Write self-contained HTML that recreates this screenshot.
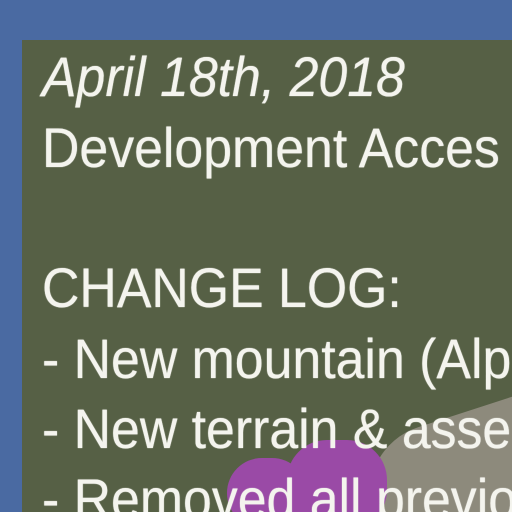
<!DOCTYPE html>
<html><head><style>
html,body{margin:0;padding:0;width:512px;height:512px;overflow:hidden;}
body{background:#4a6aa2;position:relative;font-family:"Liberation Sans",sans-serif;}
.wrap{position:absolute;left:0;top:0;width:512px;height:512px;overflow:hidden;}
.panel{position:absolute;left:22px;top:40px;width:490px;height:472px;background:#566045;overflow:hidden;}
.grey{position:absolute;left:355px;top:370px;width:220px;height:200px;background:#8d8a7c;border-radius:70px 0 0 0;transform:rotate(-18deg);}
.p1{position:absolute;left:205px;top:418px;width:80px;height:70px;background:#9a4aa6;border-radius:35px;}
.p2{position:absolute;left:265px;top:400px;width:100px;height:90px;background:#9a4aa6;border-radius:40px;}
.t{position:absolute;left:42px;color:#f4f4ee;font-size:56px;white-space:nowrap;transform-origin:0 0;transform:scaleX(0.925);line-height:1;text-shadow:0 0 1px #f4f4ee;}
</style></head><body>
<div class="wrap">
<div class="panel">
<div class="grey"></div>
<div class="p1"></div><div class="p2"></div>
</div>
<div class="t" style="top:49px;font-style:italic;">April 18th, 2018</div>
<div class="t" style="top:120px;">Development Acces</div>
<div class="t" style="top:260px;">CHANGE LOG:</div>
<div class="t" style="top:331px;">- New mountain (Alp</div>
<div class="t" style="top:401px;">- New terrain &amp; asse</div>
<div class="t" style="top:471px;">- Removed all previo</div>
</div>
</body></html>
